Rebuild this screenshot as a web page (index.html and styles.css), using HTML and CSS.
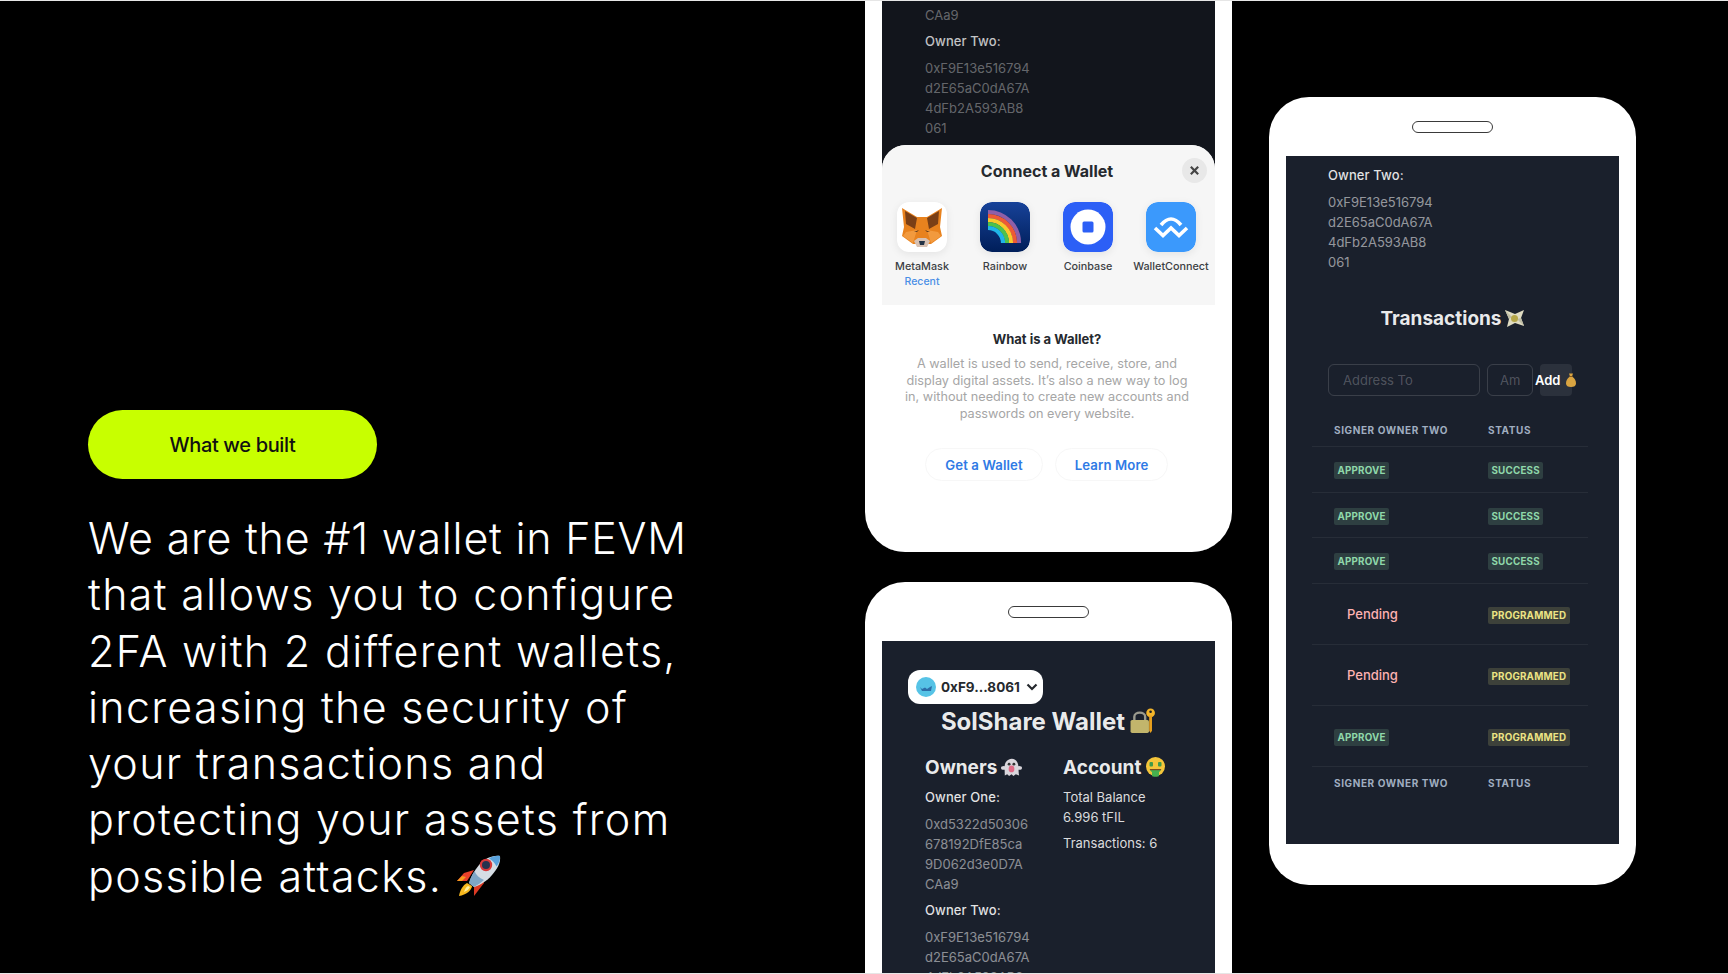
FILE: index.html
```html
<!DOCTYPE html>
<html lang="en">
<head>
<meta charset="utf-8">
<title>What we built</title>
<link rel="stylesheet" href="styles.css">
</head>
<body>
<main class="stage">
  <section class="intro">
    <div class="pill">What we built</div>
    <p class="pitch"><span class="pitch-first">We are the #1 wallet in FEVM</span><br>that allows you to configure<br>2FA with 2 different wallets,<br>increasing the security of<br>your transactions and<br>protecting your assets from<br>possible attacks.
      <svg class="rocket" viewBox="0 0 45 44" aria-hidden="true">
        <path d="M1 27 L8 19 L18 16 L11 27 Z" fill="#e8402a"/>
        <path d="M1 27 L6 22 L10 23 L6 27 Z" fill="#f59a1f"/>
        <path d="M18 42 L28 29 L26 22 L18 32 Z" fill="#dd3a24"/>
        <path d="M3 42 C4 36 7 31 11 29 L16 32 C16 36 10 41 3 42 Z" fill="#f8b91e"/>
        <path d="M8 38 C9 35 10 33 12 32 L14 33 C13 35 11 37 8 38 Z" fill="#fff0a0"/>
        <path d="M44 2 C36 1 28 5 23 11 C18 17 15 23 13 29 L18 33 C24 31 31 27 36 21 C41 15 45 9 44 2 Z" fill="#d5dde4"/>
        <path d="M44 2 C40 1.500 36 2.500 33 4.500 C36 6 39 9 40.500 12.500 C43 9 44.500 5.500 44 2 Z" fill="#5aa3de"/>
        <path d="M13 29 C14 25 16 21 18.500 17 C20 21 23 24 28 26 C25 29 21 31 18 33 Z" fill="#7fa6c6"/>
        <circle cx="30" cy="11" r="6.200" fill="#d8393a"/>
        <circle cx="30" cy="11" r="4" fill="#26324e"/>
      </svg>
    </p>
  </section>

  <section class="column">
    <article class="phone phone-modal">
      <div class="screen screen-dim">
        <div class="owner-block">
          <p class="address">CAa9</p>
          <p class="label">Owner Two:</p>
          <p class="address">0xF9E13e516794<br>d2E65aC0dA67A<br>4dFb2A593AB8<br>061</p>
        </div>
        <div class="modal">
          <div class="modal-top">
            <div class="modal-head">
              <h2 class="modal-title">Connect a Wallet</h2>
              <span class="close">
                <svg viewBox="0 0 12 12" aria-hidden="true"><path d="M2 2 L10 10 M10 2 L2 10"/></svg>
              </span>
            </div>
            <div class="wallets">
              <div class="wallet">
                <svg class="wallet-icon" viewBox="0 0 50 50" aria-hidden="true">
                  <rect width="50" height="50" rx="12" fill="#fff"/>
                  <path d="M5 6 L20 15 H30 L45 6 L43 25 L45 34 L34 42 H16 L5 34 L7 25 Z" fill="#e8821e"/>
                  <path d="M8 9 L20 16 L18 27 L9 22 Z M42 9 L30 16 L32 27 L41 22 Z" fill="#7a3f16"/>
                  <path d="M9 30 L20 28 L16 41 L6 34 Z M41 30 L30 28 L34 41 L44 34 Z" fill="#f29a3e"/>
                  <path d="M17 30 L22 28 L20 30 Z M33 30 L28 28 L30 30 Z" fill="#5b3a1e"/>
                  <path d="M17 39 L21 36 H29 L33 39 L30 45 H20 Z" fill="#d7c1b3"/>
                  <path d="M22 39 H28 L27 43 H23 Z" fill="#233447"/>
                </svg>
                <span class="wallet-name">MetaMask</span>
                <span class="wallet-tag">Recent</span>
              </div>
              <div class="wallet">
                <svg class="wallet-icon" viewBox="0 0 50 50" aria-hidden="true">
                  <defs><linearGradient id="rb" x1="0" y1="0" x2="0" y2="1"><stop offset="0" stop-color="#174299"/><stop offset="1" stop-color="#001e59"/></linearGradient></defs>
                  <rect width="50" height="50" rx="12" fill="url(#rb)"/>
                  <g fill="none" stroke-width="4.200">
                    <path d="M8 10 A31 31 0 0 1 39 41" stroke="#8f5fa8"/>
                    <path d="M8 14 A27 27 0 0 1 35 41" stroke="#ee5a35"/>
                    <path d="M8 18 A23 23 0 0 1 31 41" stroke="#fbc82c"/>
                    <path d="M8 22 A19 19 0 0 1 27 41" stroke="#4ec24b"/>
                    <path d="M8 26 A15 15 0 0 1 23 41" stroke="#1fb5e8"/>
                  </g>
                </svg>
                <span class="wallet-name">Rainbow</span>
              </div>
              <div class="wallet">
                <svg class="wallet-icon" viewBox="0 0 50 50" aria-hidden="true">
                  <rect width="50" height="50" rx="12" fill="#2c5ff6"/>
                  <circle cx="25" cy="25" r="17.500" fill="#fff"/>
                  <rect x="19.500" y="19.500" width="11" height="11" rx="1.500" fill="#2c5ff6"/>
                </svg>
                <span class="wallet-name">Coinbase</span>
              </div>
              <div class="wallet">
                <svg class="wallet-icon" viewBox="0 0 50 50" aria-hidden="true">
                  <rect width="50" height="50" rx="12" fill="#3b99fc"/>
                  <path d="M15 23 Q25 11 35 23 M9 26 L17 33.500 L25 26 L33 33.500 L41 26" fill="none" stroke="#fff" stroke-width="3.600"/>
                </svg>
                <span class="wallet-name">WalletConnect</span>
              </div>
            </div>
          </div>
          <div class="modal-body">
            <h3 class="what">What is a Wallet?</h3>
            <p class="desc">A wallet is used to send, receive, store, and<br>display digital assets. It’s also a new way to log<br>in, without needing to create new accounts and<br>passwords on every website.</p>
            <div class="actions">
              <a class="action action-get">Get a Wallet</a>
              <a class="action action-learn">Learn More</a>
            </div>
          </div>
        </div>
      </div>
    </article>

    <article class="phone phone-home">
      <div class="phone-head"><span class="notch"></span></div>
      <div class="screen screen-home">
        <div class="chip">
          <svg class="chip-avatar" viewBox="0 0 20 20" aria-hidden="true">
            <circle cx="10" cy="10" r="10" fill="#56c3e6"/>
            <path d="M4 10 L6 12 L9 10.500 L11 12 L14 10 L16 9 L15 14 H6 Z" fill="#2d6ea8"/>
          </svg>
          <span class="chip-text">0xF9...8061</span>
          <svg class="chevron" viewBox="0 0 12 8" aria-hidden="true"><path d="M1.500 1.500 L6 6 L10.500 1.500"/></svg>
        </div>
        <h1 class="wallet-title">SolShare Wallet
          <svg class="emoji-lock" viewBox="0 0 24 24" aria-hidden="true">
            <path d="M4 12 V8 C4 3 14 3 14 8 V12" fill="none" stroke="#9a9a8e" stroke-width="2.200"/>
            <rect x="0.500" y="11" width="17" height="12" rx="1.500" fill="#c2b56c"/>
            <circle cx="19" cy="4.500" r="4" fill="#f3b52a"/>
            <circle cx="19" cy="3.500" r="1.200" fill="#1a202c"/>
            <path d="M17.700 7 H20.300 V21 L19 23 L17.700 21 Z" fill="#e8a01e"/>
          </svg>
        </h1>
        <div class="summary">
          <div class="owners">
            <h2 class="section-title">Owners
              <svg class="emoji" viewBox="0 0 22 20" aria-hidden="true">
                <ellipse cx="3" cy="11" rx="3" ry="2" fill="#d9d6dc"/>
                <ellipse cx="19" cy="11" rx="3" ry="2" fill="#d9d6dc"/>
                <path d="M4 19 C4 14 3 8 5 5 C8 0 15 0 17 5 C19 8 18 14 19 19 L15.500 17.500 L13 19.500 L11 17.500 L8.500 19.500 L6.500 17.500 Z" fill="#d9d6dc"/>
                <circle cx="8.500" cy="7" r="1.500" fill="#333"/><circle cx="13.500" cy="7" r="1.500" fill="#333"/>
                <ellipse cx="11" cy="12" rx="3" ry="3.500" fill="#e06a86"/>
              </svg>
            </h2>
            <p class="label">Owner One:</p>
            <p class="address">0xd5322d50306<br>678192DfE85ca<br>9D062d3e0D7A<br>CAa9</p>
            <p class="label">Owner Two:</p>
            <p class="address">0xF9E13e516794<br>d2E65aC0dA67A<br>4dFb2A593AB8</p>
          </div>
          <div class="account">
            <h2 class="section-title">Account
              <svg class="emoji" viewBox="0 0 20 20" aria-hidden="true">
                <circle cx="10" cy="9.500" r="9.500" fill="#f4c53a"/>
                <rect x="4" y="5" width="3.500" height="4.500" rx="1" fill="#3f9a4a"/>
                <rect x="12.500" y="5" width="3.500" height="4.500" rx="1" fill="#3f9a4a"/>
                <path d="M4 12 H16 C15 14 14 15 13.500 15 V19 C13.500 20 6.500 20 6.500 19 V15 C6 15 5 14 4 12 Z" fill="#45b04f"/>
                <rect x="4.500" y="12" width="11" height="1.200" fill="#7a4a1e"/>
              </svg>
            </h2>
            <p class="stat">Total Balance<br>6.996 tFIL</p>
            <p class="stat">Transactions: 6</p>
          </div>
        </div>
      </div>
    </article>
  </section>

  <section class="side">
    <article class="phone phone-tx">
      <div class="phone-head"><span class="notch"></span></div>
      <div class="screen screen-tx">
        <p class="label">Owner Two:</p>
        <p class="address">0xF9E13e516794<br>d2E65aC0dA67A<br>4dFb2A593AB8<br>061</p>
        <h2 class="tx-title">Transactions
          <svg class="emoji-wings" viewBox="0 0 21 19" aria-hidden="true">
            <path d="M1 1 L11 5 L20 1 L17 9 L20 17 L11 14 L3 18 L5 10 Z" fill="#e0dcc2"/>
            <path d="M1 1 L8 8 L5 10 Z M20 17 L13 10 L17 9 Z" fill="#bfbda6"/>
            <circle cx="10.500" cy="9.500" r="3.500" fill="#b5a648"/>
          </svg>
        </h2>
        <div class="tx-form">
          <span class="field field-address">Address To</span>
          <span class="field field-amount"><span class="field-clip">Am</span></span>
          <span class="add"><span class="add-text">Add</span>
            <svg class="emoji-bag" viewBox="0 0 10 14" aria-hidden="true">
              <path d="M3 0.500 H7 L6 3.500 C9 5 10 8 10 10.500 C10 13 8 14 5 14 C2 14 0 13 0 10.500 C0 8 1 5 4 3.500 Z" fill="#d9a441"/>
              <rect x="3.500" y="3" width="3" height="1" fill="#8a5a1a"/>
            </svg>
          </span>
        </div>
        <div class="tx-table">
          <div class="tx-row tx-header"><span>Signer Owner Two</span><span>Status</span></div>
          <div class="tx-row tx-sm"><span class="badge badge-green">Approve</span><span class="badge badge-green">Success</span></div>
          <div class="tx-row tx-sm"><span class="badge badge-green">Approve</span><span class="badge badge-green">Success</span></div>
          <div class="tx-row tx-sm"><span class="badge badge-green">Approve</span><span class="badge badge-green">Success</span></div>
          <div class="tx-row tx-lg"><span class="pending">Pending</span><span class="badge badge-yellow">Programmed</span></div>
          <div class="tx-row tx-lg"><span class="pending">Pending</span><span class="badge badge-yellow">Programmed</span></div>
          <div class="tx-row tx-lg"><span class="badge badge-green">Approve</span><span class="badge badge-yellow">Programmed</span></div>
          <div class="tx-row tx-header tx-footer"><span>Signer Owner Two</span><span>Status</span></div>
        </div>
      </div>
    </article>
  </section>
</main>
</body>
</html>
```
FILE: styles.css
```css
* { box-sizing: border-box; }
html, body { margin: 0; padding: 0; background: #000; }
body { font-family: Inter, "Liberation Sans", sans-serif; overflow: hidden; }
h1, h2, h3, p { margin: 0; font: inherit; }
svg { display: block; }

.stage {
  display: flex;
  height: 974px;
  overflow: hidden;
  background: #000;
  border-top: 1px solid #e6e6e6;
  border-bottom: 1px solid #e6e6e6;
}

/* left column */
.intro { width: 865px; padding: 409px 0 0 88px; flex: none; }
.pill {
  width: 289px; height: 69px; border-radius: 35px;
  background: #c8ff00; color: #111;
  display: flex; align-items: center; justify-content: center;
  font-size: 20px; font-weight: 500; letter-spacing: -0.35px;
}
.pitch {
  margin-top: 31px;
  color: #fff;
  font-size: 43px; font-weight: 300; line-height: 56.250px;
  letter-spacing: 1.300px;
  white-space: nowrap;
}
.pitch-first { letter-spacing: .750px; }
.rocket { display: inline-block; width: 45px; height: 44px; vertical-align: -6px; }

/* phones */
.column { width: 367px; flex: none; display: flex; flex-direction: column; gap: 30px; }
.side { flex: none; margin-left: 37px; padding-top: 96px; }
.phone { width: 367px; background: #fff; padding: 0 17px; flex: none; }
.phone-modal { height: 551px; border-radius: 0 0 40px 40px; overflow: hidden; }
.phone-home { height: 500px; border-radius: 40px 40px 0 0; }
.phone-tx { height: 788px; border-radius: 40px; }
.phone-head { height: 59px; padding-top: 24px; }
.notch {
  display: block; width: 81px; height: 12px; margin: 0 auto;
  border: 1px solid #3a3a3a; border-radius: 6px; background: #fff;
}
.screen { background: #1a202c; color: #fff; }

/* shared text */
.label { font-size: 13px; font-weight: 500; letter-spacing: .1px; line-height: 20px; color: rgba(255,255,255,.88); }
.address { font-size: 13px; line-height: 20px; color: rgba(255,255,255,.5); }

/* top phone */
.screen-dim { height: 551px; background: #12151c; display: flex; flex-direction: column; }
.owner-block { height: 144px; padding: 4px 0 0 43px; color: #fff; }
.owner-block .label { margin-top: 6px; color: rgba(255,255,255,.75); }
.owner-block .address { color: rgba(255,255,255,.36); }
.owner-block .label + .address { margin-top: 7px; }
.modal { flex: 1; background: #fff; border-radius: 24px 24px 0 0; overflow: hidden; color: #25292e; }
.modal-top { height: 160px; background: #f6f6f6; }
.modal-head { position: relative; padding: 16px 3px 0 0; text-align: center; }
.modal-title { font-size: 16px; font-weight: 700; line-height: 20px; }
.close {
  position: absolute; right: 8px; top: 13px;
  width: 25px; height: 25px; border-radius: 50%; background: #e8e8e8;
  display: flex; align-items: center; justify-content: center;
}
.close svg { width: 11px; height: 11px; fill: none; stroke: #444; stroke-width: 2.400; }
.wallets { display: grid; grid-template-columns: repeat(4, 83px); margin-left: -1.500px; padding-top: 21px; }
.wallet { display: flex; flex-direction: column; align-items: center; }
.wallet-icon { width: 50px; height: 50px; border-radius: 12px; box-shadow: 0 2px 8px rgba(0,0,0,.08); }
.wallet-name { margin-top: 7px; font-size: 10.800px; font-weight: 500; line-height: 15px; color: #3c3f44; white-space: nowrap; }
.wallet-tag { font-size: 10.500px; font-weight: 500; line-height: 15px; color: #4a8fe6; }
.modal-body { text-align: center; padding: 25px 3px 0 0; }
.what { font-size: 13px; font-weight: 700; line-height: 18px; }
.desc { margin-top: 8px; font-size: 12.700px; line-height: 16.500px; color: #a6a6a6; }
.actions { display: flex; justify-content: flex-start; gap: 12px; margin: 26px 0 0 43px; }
.action {
  height: 33px; border-radius: 17px; border: 1px solid #f7f7f7;
  display: flex; align-items: center; justify-content: center;
  color: #2f7ae5; font-size: 13.200px; font-weight: 600; letter-spacing: .1px;
}
.action-get { width: 118px; }
.action-learn { width: 113px; }

/* home phone */
.screen-home { height: 441px; padding: 29px 0 0 26px; overflow: hidden; }
.chip {
  width: 135px; height: 34px; border-radius: 12px; background: #fff;
  display: flex; align-items: center; padding-left: 8px; gap: 5px;
}
.chip-avatar { width: 20px; height: 20px; flex: none; }
.chip-text { color: #25292e; font-size: 13.500px; font-weight: 700; white-space: nowrap; }
.chevron { width: 12px; height: 8px; fill: none; stroke: #25292e; stroke-width: 2.200; flex: none; margin-left: 1px; }
.wallet-title {
  display: flex; align-items: center; justify-content: center; gap: 5px;
  margin-left: -26px; height: 34px;
  font-size: 24px; font-weight: 700; color: rgba(255,255,255,.92);
}
.emoji-lock { width: 26px; height: 26px; }
.summary { display: flex; margin-top: 15px; padding-left: 17px; }
.owners { width: 138px; flex: none; }
.section-title {
  display: flex; align-items: center; gap: 4px;
  height: 28px; font-size: 19px; font-weight: 700; color: rgba(255,255,255,.92);
}
.emoji { width: 21px; height: 20px; }
.owners .label { margin-top: 6px; }
.owners .address { margin-top: 7px; }
.owners .address + .label { margin-top: 6px; }
.stat { margin-top: 6px; font-size: 13px; line-height: 20px; color: rgba(255,255,255,.85); }

/* transactions phone */
.screen-tx { height: 688px; padding: 9px 0 0 42px; }
.screen-tx .address { margin-top: 7px; color: rgba(255,255,255,.55); }
.tx-title {
  display: flex; align-items: center; justify-content: center; gap: 2px;
  margin: 32px 0 0 -42px; height: 28px;
  font-size: 19px; font-weight: 700; color: rgba(255,255,255,.92);
}
.emoji-wings { width: 21px; height: 19px; }
.tx-form { display: flex; margin-top: 32px; height: 32px; }
.field {
  height: 32px; border: 1px solid rgba(255,255,255,.14); border-radius: 6px;
  font-size: 13px; line-height: 30px; color: rgba(255,255,255,.24);
  white-space: nowrap;
}
.field-address { width: 152px; padding-left: 14px; }
.field-amount { width: 46px; margin-left: 7px; padding: 0 12px; }
.field-clip { display: block; overflow: hidden; }
.add {
  position: relative;
  width: 32px; height: 32px; margin-left: 7px;
  background: rgba(255,255,255,.08); border-radius: 4px;
  display: flex; align-items: center; flex: none;
  font-size: 13px; font-weight: 600; color: #fff; white-space: nowrap;
}
.add-text { margin-left: -5px; }
.emoji-bag { width: 10px; height: 14px; flex: none; margin-left: 5px; }
.tx-table { margin: 24px 0 0 -16px; width: 276px; }
.tx-row {
  display: grid; grid-template-columns: 154px 1fr; align-items: center; justify-items: start;
  padding-left: 22px; border-bottom: 1px solid rgba(255,255,255,.06);
}
.tx-header {
  height: 27px; padding-bottom: 7px;
  font-size: 10px; font-weight: 700; letter-spacing: .6px; text-transform: uppercase;
  color: #a0aec0;
}
.tx-footer { border-bottom: 0; height: 32px; padding-bottom: 0; }
.tx-sm { height: 45.500px; padding-top: 3px; }
.tx-lg { height: 61px; }
.tx-lg .badge { margin-top: 3px; }
.badge {
  height: 17px; padding: 0 3.500px; border-radius: 2px;
  font-size: 9.800px; font-weight: 700; letter-spacing: .2px; line-height: 17px; text-transform: uppercase;
}
.badge-green { color: #8fd8aa; background: rgba(154,230,180,.16); }
.badge-yellow { color: #ece484; background: rgba(250,240,137,.16); }
.pending { margin-left: 13px; font-size: 13px; font-weight: 500; color: #feb2b2; }
```
